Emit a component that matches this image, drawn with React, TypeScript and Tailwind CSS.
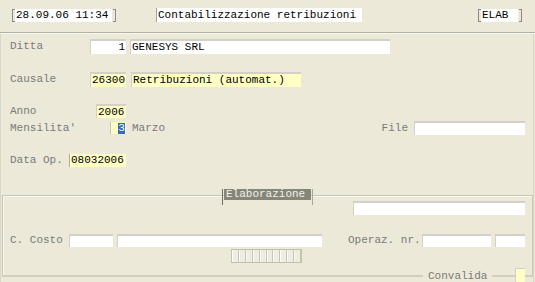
import React from "react";

type FieldProps = {
  className?: string;
  yellow?: boolean;
  right?: boolean;
  children?: React.ReactNode;
};

function Field({ className = "", yellow = false, right = false, children }: FieldProps) {
  return (
    <div
      className={
        "shrink-0 border-t-2 border-l border-[#D4D0C8] text-black leading-[12px] overflow-hidden whitespace-pre px-[1px] " +
        (yellow ? "bg-[#FFFFC4] " : "bg-white ") +
        (right ? "text-right " : "") +
        className
      }
    >
      {children}
    </div>
  );
}

function BracketL() {
  return <div className="w-[3px] h-[13px] border-l border-t border-b border-[#8a8a8a] shrink-0" />;
}
function BracketR() {
  return <div className="w-[3px] h-[13px] border-r border-t border-b border-[#8a8a8a] shrink-0" />;
}

export default function App() {
  return (
    <div className="w-[535px] h-[282px] bg-[#ECE9D8] font-['Courier_New','Nimbus_Mono_PS','FreeMono','Liberation_Mono',monospace] text-[11px] text-[#7a7a7a] overflow-hidden flex flex-col">
      {/* Header */}
      <div className="h-[32px] shrink-0 flex items-start pt-[9px] text-black">
        <div className="ml-[12px] flex items-center">
          <BracketL />
          <div className="w-[97px] h-[13px] bg-white leading-[13px] pl-[1px]">28.09.06 11:34</div>
          <div className="w-[1px]" />
          <BracketR />
        </div>
        <div className="ml-[40px] -mt-[1px] w-[206px] h-[14px] bg-white border-l border-[#a0a0a0] leading-[14px] pl-[1px]">
          Contabilizzazione retribuzioni
        </div>
        <div className="ml-[116px] flex items-center">
          <BracketL />
          <div className="w-[37px] h-[13px] bg-white leading-[13px] pl-[1px]">ELAB</div>
          <div className="w-[1px]" />
          <BracketR />
        </div>
      </div>
      <div className="h-[2px] shrink-0 border-t border-[#B5B29F] border-b border-b-[#F7F6F0]" />

      {/* Body */}
      <div className="flex-1 flex flex-col w-[534px] border-l border-r border-[#DAD6C6]">
        {/* Ditta */}
        <div className="mt-[5px] h-[15px] flex items-center">
          <div className="w-[125px] pl-[9px] flex justify-between items-center">
            <span>Ditta</span>
            <Field right className="w-[36px] h-[15px]">1</Field>
          </div>
          <Field className="ml-[4px] w-[260px] h-[15px]">GENESYS SRL</Field>
        </div>

        {/* Causale */}
        <div className="mt-[18px] h-[15px] flex items-center">
          <div className="w-[125px] pl-[9px] flex justify-between items-center">
            <span>Causale</span>
            <Field yellow className="w-[36px] h-[15px]">26300</Field>
          </div>
          <Field yellow className="ml-[5px] w-[170px] h-[15px]">Retribuzioni (automat.)</Field>
        </div>

        {/* Anno */}
        <div className="mt-[17px] h-[14px] flex items-center">
          <div className="w-[125px] pl-[9px] flex justify-between items-center">
            <span>Anno</span>
            <Field yellow className="w-[30px] h-[14px]">2006</Field>
          </div>
        </div>

        {/* Mensilita' */}
        <div className="mt-[3px] h-[14px] flex items-center">
          <div className="w-[125px] pl-[9px] flex justify-between items-center">
            <span>Mensilita'</span>
            <div className="w-[16px] h-[12px] bg-[#FFFFC4] border-l border-[#C8C4B4] flex justify-end items-center">
              <span className="bg-[#316AC5] text-white leading-[11px] h-[11px] w-[7px] text-center">3</span>
              <div className="w-[1px]" />
            </div>
          </div>
          <span className="ml-[6px]">Marzo</span>
          <span className="ml-auto">File</span>
          <Field className="ml-[6px] w-[111px] h-[14px] mr-[8px]" />
        </div>

        {/* Data Op. */}
        <div className="mt-[19px] h-[13px] flex items-center">
          <div className="w-[125px] pl-[9px] flex justify-between items-center">
            <span>Data Op.</span>
            <div className="w-[57px] h-[13px] bg-[#FFFFC4] border-l border-[#B0AC9C] text-black leading-[13px] px-[1px]">
              08032006
            </div>
          </div>
        </div>

        {/* Elaborazione group */}
        <div className="mt-[28px] ml-[1px] w-[531px] h-[82px] relative border-t border-l border-r border-b-2 border-[#C9C6B4] border-b-[#D2CFBE] shadow-[inset_1px_1px_0_#F8F7F2]">
          <div className="absolute top-[-7px] left-[219px] flex items-start">
            <div className="w-[1px] h-[16px] bg-[#6E6E66]" />
            <div className="ml-[1px] w-[87px] h-[11px] bg-[#858579] text-[#F2F2EC] leading-[11px] pl-[2px]">
              Elaborazione
            </div>
            <div className="ml-[1px] w-[1px] h-[16px] bg-[#A9A699]" />
          </div>

          <div className="mt-[5px] flex justify-end pr-[7px]">
            <Field className="w-[172px] h-[14px]" />
          </div>

          <div className="mt-[19px] h-[13px] flex items-center pl-[7px]">
            <span className="w-[59px] shrink-0">C. Costo</span>
            <Field className="w-[44px] h-[13px]" />
            <Field className="ml-[4px] w-[205px] h-[13px]" />
            <span className="ml-[26px] w-[74px] shrink-0">Operaz. nr.</span>
            <Field className="w-[69px] h-[13px]" />
            <Field className="ml-[4px] w-[30px] h-[13px]" />
          </div>

          <div className="mt-[2px] pl-[228px] flex">
            <div className="w-[71px] h-[14px] border border-[#C4C0AE] flex bg-[#EFEDE2]">
              {Array.from({ length: 10 }).map((_, i) => (
                <div key={i} className="w-[7px] h-full border-r border-[#C9C5B3] shadow-[inset_1px_0_0_#FAFAF5]" />
              ))}
            </div>
          </div>

          <div className="absolute bottom-[-7px] left-[420px] bg-[#ECE9D8] px-[5px] leading-[11px] h-[11px]">
            Convalida
          </div>
          <div className="absolute bottom-[-7px] left-[512px] w-[10px] h-[14px] bg-[#FFFFC4] border-l border-t border-[#D4D0C8]" />
        </div>
      </div>
    </div>
  );
}
